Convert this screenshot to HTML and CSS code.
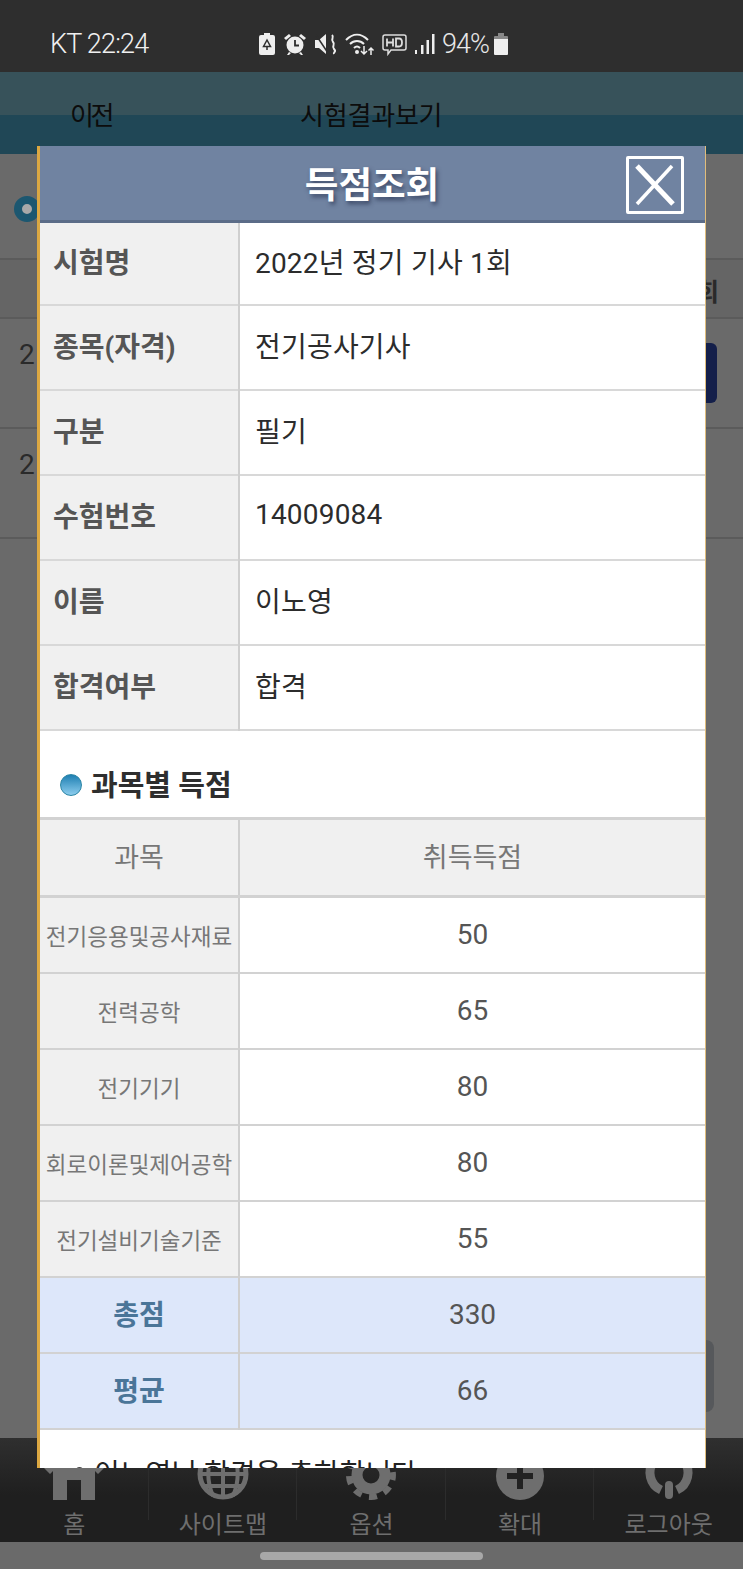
FILE: index.html
```html
<!DOCTYPE html>
<html lang="ko">
<head>
    <meta charset="UTF-8">
    <title>시험결과보기</title>
    <link rel="stylesheet" href="styles.css">
</head>
<body>
    <div class="status-bar">
        <div class="status-left">KT 22:24</div>
        <div class="status-icons">
            <svg width="18" height="24" viewBox="0 0 18 24"><path fill="#eee" d="M6 1h6v2h3a2 2 0 0 1 2 2v16a2 2 0 0 1-2 2H3a2 2 0 0 1-2-2V5a2 2 0 0 1 2-2h3z"/><path fill="none" stroke="#2e2e2e" stroke-width="1.500" d="M9 8l-3.500 6.500h7zM9 18v-3.500"/></svg>
            <svg width="24" height="24" viewBox="0 0 24 24"><circle cx="12" cy="13" r="8.500" fill="#eee"/><path fill="none" stroke="#2e2e2e" stroke-width="1.800" d="M12 8v5.500h4"/><path fill="#eee" d="M1 6l5-4 2 2-5 4zM23 6l-5-4-2 2 5 4zM6 20l-2 3 2 0 2-2zM18 20l2 3-2 0-2-2z"/></svg>
            <svg width="24" height="24" viewBox="0 0 24 24"><path fill="#eee" d="M1 8h4l7-6v20l-7-6H1z"/><path fill="none" stroke="#2e2e2e" stroke-width="1.500" d="M2 3l12 18"/><path fill="none" stroke="#eee" stroke-width="2" d="M18 3c3 3-2 4 1 7s-2 4 1 7-1 3 0 5"/></svg>
            <svg width="30" height="24" viewBox="0 0 30 24"><g fill="none" stroke="#eee" stroke-width="2"><path d="M1 8c7-7 15-7 22 0"/><path d="M5 12c4-4 10-4 14 0"/><path d="M9 16c2-2 4-2 6 0"/></g><circle cx="12" cy="20" r="2" fill="#eee"/><path fill="none" stroke="#eee" stroke-width="1.500" d="M19 14v8M16 19l3 3 3-3M26 23v-7M23.500 18.500l2.500-2.500 2.500 2.500"/></svg>
            <svg width="25" height="24" viewBox="0 0 25 24"><path fill="none" stroke="#ddd" stroke-width="1.500" d="M3 3h19a2 2 0 0 1 2 2v11a2 2 0 0 1-2 2H9l-3 4v-4H3a2 2 0 0 1-2-2V5a2 2 0 0 1 2-2z"/><path fill="none" stroke="#ddd" stroke-width="1.800" d="M5 6.500v8M11 6.500v8M5 10.500h6M14 6.500v8h3c4 0 4-8 0-8z"/></svg>
            <svg width="21" height="24" viewBox="0 0 21 24"><path fill="#eee" d="M1 18h2v4H1zM7 13h2.500v9H7zM12.500 8h2.500v14h-2.500zM18 2h2.500v20H18z"/></svg>
            <span class="battery-text">94%</span>
            <svg width="16" height="24" viewBox="0 0 16 24"><path fill="#888" d="M5 1h6v3h3a1 1 0 0 1 1 1v3H1V5a1 1 0 0 1 1-1h3z"/><path fill="#eee" d="M1 7h14v15a1 1 0 0 1-1 1H2a1 1 0 0 1-1-1z"/></svg>
        </div>
    </div>

    <div class="top-bar">
        <div class="top-back">이전</div>
        <div class="top-title">시험결과보기</div>
    </div>

    <main class="page">
        <h2 class="page-heading"><span class="ring"></span></h2>
        <table class="bg-table">
            <tr class="bg-head"><td>회</td></tr>
            <tr><td><span class="bg-num">2</span><span class="bg-btn"></span></td></tr>
            <tr><td><span class="bg-num">2</span></td></tr>
        </table>
        <div class="side-tab"></div>
    </main>

    <nav class="bottom-nav">
        <div class="nav-item">
            <svg width="60" height="62" viewBox="0 0 60 62"><path fill="#6e6e6e" fill-rule="evenodd" d="M30 4l30 26-6 6-3-3v29H9V33l-3 3-6-6zM23 62h14V42H23z"/></svg>
            <span>홈</span>
        </div>
        <div class="nav-item">
            <svg width="60" height="62" viewBox="0 0 60 62"><circle cx="30" cy="36" r="23" fill="none" stroke="#6e6e6e" stroke-width="5"/><path fill="none" stroke="#6e6e6e" stroke-width="4" d="M30 13v46M7 36h46M11 48h38M20 14c-6 14-6 30 0 44M40 14c6 14 6 30 0 44"/></svg>
            <span>사이트맵</span>
        </div>
        <div class="nav-item">
            <svg width="60" height="62" viewBox="0 0 60 62"><circle cx="30" cy="37" r="14" fill="none" stroke="#6e6e6e" stroke-width="11"/><path fill="none" stroke="#6e6e6e" stroke-width="6" stroke-dasharray="8 7.700" d="M30 15a22 22 0 1 1-.1 0"/></svg>
            <span>옵션</span>
        </div>
        <div class="nav-item">
            <svg width="60" height="62" viewBox="0 0 60 62"><circle cx="30" cy="38" r="24" fill="#6e6e6e"/><path fill="#222" d="M27 25h6v10h10v6H33v10h-6V41H17v-6h10z"/></svg>
            <span>확대</span>
        </div>
        <div class="nav-item">
            <svg width="60" height="62" viewBox="0 0 60 62"><path fill="none" stroke="#6e6e6e" stroke-width="9" d="M22 52A19 19 0 1 1 38 52"/><path fill="none" stroke="#6e6e6e" stroke-width="8" stroke-linecap="round" d="M30 47v10"/></svg>
            <span>로그아웃</span>
        </div>
    </nav>

    <div class="home-area"><div class="home-bar"></div></div>

    <div class="modal">
        <div class="modal-title">
            <h1>득점조회</h1>
            <button class="modal-close">
                <svg width="42" height="42" viewBox="0 0 42 42"><path stroke="#fff" fill="none" stroke-width="5" d="M3 2l36 38"/><path stroke="#fff" fill="none" stroke-width="3.500" d="M38 2L3 40"/></svg>
            </button>
        </div>
        <table class="info-table">
            <tr class="row-a"><th>시험명</th><td>2022년 정기 기사 1회</td></tr>
            <tr><th>종목(자격)</th><td>전기공사기사</td></tr>
            <tr><th>구분</th><td>필기</td></tr>
            <tr><th>수험번호</th><td>14009084</td></tr>
            <tr><th>이름</th><td>이노영</td></tr>
            <tr><th>합격여부</th><td>합격</td></tr>
        </table>
        <h2 class="section-title"><span class="ball"></span>과목별 득점</h2>
        <table class="score-table">
            <tr class="score-head"><th>과목</th><td>취득득점</td></tr>
            <tr><th>전기응용및공사재료</th><td>50</td></tr>
            <tr><th>전력공학</th><td>65</td></tr>
            <tr><th>전기기기</th><td>80</td></tr>
            <tr><th>회로이론및제어공학</th><td>80</td></tr>
            <tr><th>전기설비기술기준</th><td>55</td></tr>
            <tr class="score-sum"><th>총점</th><td>330</td></tr>
            <tr class="score-sum"><th>평균</th><td>66</td></tr>
        </table>
        <p class="congrats"><span class="dot"></span>이노영님 합격을 축하합니다</p>
    </div>
</body>
</html>
```

FILE: styles.css
```css
* {
    margin: 0;
    padding: 0;
    box-sizing: border-box;
}
html, body {
    width: 100%;
    height: 100%;
    overflow: hidden;
}
body {
    position: relative;
    display: flex;
    flex-direction: column;
    height: 1569px;
    font-family: 'Roboto', 'Noto Sans CJK KR', sans-serif;
    background: #6a6a6a;
}
.status-bar {
    height: 72px;
    flex: none;
    background: #2e2e2e;
    color: #f0f0f0;
    display: flex;
    align-items: center;
    padding: 16px 0 0 50px;
    font-size: 27px;
    font-weight: 300;
    letter-spacing: -.8px;
}
.status-left {
    width: 208px;
}
.status-icons {
    display: flex;
    align-items: center;
    gap: 7px;
}
.battery-text {
    font-size: 27px;
    letter-spacing: -1px;
    margin-right: -3px;
    color: #e8e8e8;
}
.top-bar {
    height: 82px;
    flex: none;
    display: flex;
    align-items: center;
    background: linear-gradient(#37525a 0, #37525a 43px, #204756 43px);
    color: #0c0c0c;
    font-size: 26px;
    padding-left: 70px;
}
.top-back {
    width: 230px;
    letter-spacing: -3.500px;
}
.top-title {
    letter-spacing: -.2px;
}
.page {
    flex: 1;
    background: #6a6a6a;
    position: relative;
}
.page-heading {
    height: 104px;
    padding: 42px 0 0 14px;
}
.ring {
    display: block;
    width: 26px;
    height: 26px;
    border-radius: 50%;
    border: 8px solid #1c5770;
    background: #a9a9a9;
}
.bg-table {
    width: 100%;
    border-collapse: collapse;
    color: #2a2a2a;
    font-size: 28px;
}
.bg-table td {
    border-top: 2px solid #5b5b5b;
    border-bottom: 2px solid #5b5b5b;
    height: 110px;
    padding-left: 19px;
    vertical-align: top;
    position: relative;
}
.bg-head td {
    height: 59px;
    background: #656565;
    text-align: right;
    padding: 12px 24px 0 0;
    font-weight: bold;
    font-size: 25px;
}
.bg-num {
    display: block;
    padding-top: 19px;
}
.bg-btn {
    position: absolute;
    right: 26px;
    top: 24px;
    width: 30px;
    height: 60px;
    border-radius: 6px;
    background: #141f4a;
}
.side-tab {
    position: absolute;
    right: 29px;
    top: 1186px;
    width: 30px;
    height: 72px;
    border-radius: 8px;
    background: #56585b;
}
.bottom-nav {
    height: 104px;
    flex: none;
    display: flex;
    background: linear-gradient(#2f2f2f, #1f1f1f 55%);
    color: #6e6e6e;
    font-size: 24px;
}
.nav-item {
    flex: 1;
    display: flex;
    flex-direction: column;
    align-items: center;
    background: linear-gradient(#2c2c2c, #2c2c2c) right top / 1px 82px no-repeat;
    line-height: 36px;
}
.nav-item:last-child {
    background: none;
}
.nav-item svg {
    flex: none;
    margin-bottom: 7px;
}
.home-area {
    height: 27px;
    flex: none;
    background: #6a6a6a;
    display: flex;
    justify-content: center;
    padding-top: 10px;
}
.home-bar {
    width: 223px;
    height: 8px;
    border-radius: 4px;
    background: #a8a8a8;
}
.modal {
    position: absolute;
    left: 37px;
    top: 146px;
    width: 669px;
    height: 1322px;
    overflow: hidden;
    background: #fff;
    border-left: 3px solid #dca842;
    border-right: 1px solid #e0bd7c;
}
.modal-title {
    height: 77px;
    background: #7083a1;
    border-bottom: 3px solid #5b6c88;
    display: flex;
    align-items: center;
    justify-content: center;
    position: relative;
    margin-left: -1px;
}
.modal-title h1 {
    color: #fff;
    font-size: 36.500px;
    font-weight: bold;
    padding-bottom: 2px;
    text-shadow: 2px 3px 4px rgba(40, 50, 80, .7);
}
.modal-close {
    position: absolute;
    right: 21px;
    top: 10px;
    width: 58px;
    height: 58px;
    background: none;
    border: 3px solid #fff;
    border-radius: 2px;
    display: flex;
    align-items: center;
    justify-content: center;
}
table {
    border-collapse: collapse;
    table-layout: fixed;
}
.info-table, .score-table {
    width: 100%;
}
.info-table th, .score-table th {
    width: 199px;
    background: #f0f0f0;
    border-right: 2px solid #cfcfcf;
}
.info-table tr {
    height: 85px;
    border-bottom: 2px solid #d8d8d8;
}
.info-table tr.row-a {
    height: 82px;
}
.info-table th {
    text-align: left;
    padding: 0 0 6px 13px;
    color: #555;
    font-size: 28px;
    font-weight: bold;
}
.info-table td {
    padding: 0 0 6px 15px;
    color: #2c2c2c;
    font-size: 28px;
    letter-spacing: .2px;
}
.section-title {
    height: 86px;
    padding: 35px 0 0 20px;
    display: flex;
    align-items: flex-start;
    gap: 9px;
    color: #2e2e2e;
    font-size: 29px;
    line-height: 40px;
}
.ball {
    width: 22px;
    height: 22px;
    margin-top: 8px;
    border-radius: 50%;
    background: linear-gradient(#1e7fb2, #8ccdee);
    border: 1px solid #2a85a5;
}
.score-table {
    border-top: 3px solid #d2d2d2;
}
.score-table tr {
    height: 76px;
    border-bottom: 2px solid #d2d2d2;
}
.score-table tr.score-head {
    height: 78px;
    border-bottom: 3px solid #d2d2d2;
}
.score-table th {
    color: #777;
    font-size: 22.500px;
    font-weight: normal;
}
.score-table td {
    text-align: center;
    color: #555;
    font-size: 28px;
}
.score-head th {
    font-size: 27px;
    padding-bottom: 4px;
}
.score-head td {
    background: #f0f0f0;
    color: #777;
    font-size: 27px;
    padding-bottom: 4px;
}
.score-sum th, .score-sum td {
    background: #dde7fa;
}
.score-sum th {
    color: #4a7598;
    font-size: 28px;
    font-weight: bold;
    padding-bottom: 3px;
}
.congrats {
    padding: 22px 0 0 54px;
    color: #222;
    font-size: 28px;
    position: relative;
}
.dot {
    position: absolute;
    left: 36px;
    top: 37px;
    width: 7px;
    height: 7px;
    background: #444;
    border-radius: 50%;
}
```
